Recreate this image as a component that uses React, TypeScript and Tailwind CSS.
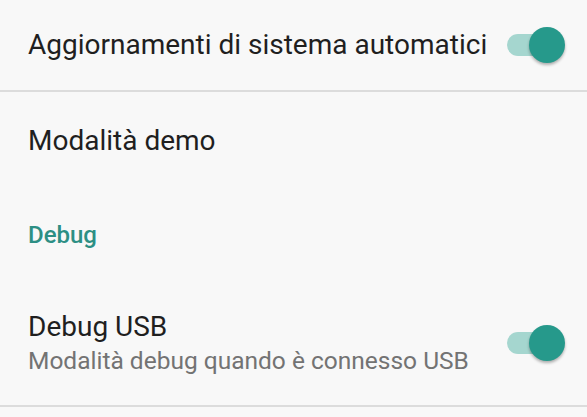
export default function App() {
  return (
    <div className="w-[587px] h-[417px] overflow-hidden bg-[#f8f8f8] font-['Roboto',sans-serif]">
      <div className="h-[90px] flex items-center justify-between pl-[28px] pr-[22px]">
        <span className="text-[28px] text-[#1f1f1f]">Aggiornamenti di sistema automatici</span>
        <Toggle />
      </div>
      <div className="h-[2px] bg-[#dcdcdc]" />
      <div className="h-[97px] flex items-center pl-[28px]">
        <span className="text-[28px] text-[#1f1f1f]">Modalità demo</span>
      </div>
      <div className="h-[92px] flex items-center pl-[28px]">
        <span className="text-[24px] font-medium text-[#2d8f84]">Debug</span>
      </div>
      <div className="h-[124px] flex items-center justify-between pl-[28px] pr-[22px]">
        <div className="flex flex-col pt-[2px]">
          <span className="text-[28px] leading-[34px] text-[#1f1f1f]">Debug USB</span>
          <span className="text-[24.5px] leading-[34px] text-[#737373]">Modalità debug quando è connesso USB</span>
        </div>
        <Toggle />
      </div>
      <div className="h-[2px] bg-[#dcdcdc]" />
    </div>
  );
}

function Toggle() {
  return (
    <div className="relative w-[58px] h-[36px] flex items-center">
      <div className="w-[50px] h-[22px] rounded-full bg-[#a5d6cf]" />
      <div className="absolute right-0 top-0 w-[36px] h-[36px] rounded-full bg-[#26998b] shadow-[0_2px_3px_rgba(0,0,0,0.3)]" />
    </div>
  );
}
